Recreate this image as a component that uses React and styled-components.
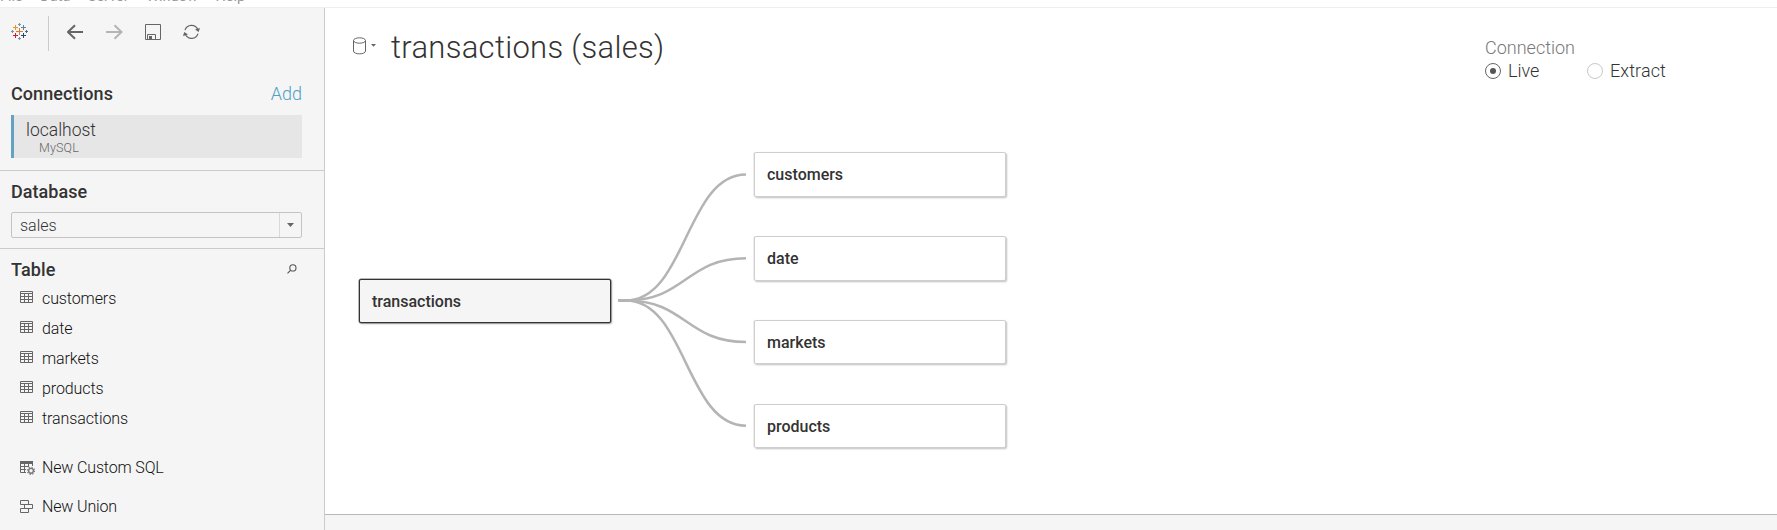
import React from "react";
import styled, { createGlobalStyle } from "styled-components";

const GlobalStyle = createGlobalStyle`
  * { box-sizing: border-box; }
  html, body { margin: 0; padding: 0; overflow: hidden; background: #fff; }
  body { font-family: Roboto, "Liberation Sans", sans-serif; font-weight: 350; color: #333; }
`;

const Window = styled.div`
  display: flex;
  flex-direction: column;
  width: 1777px;
  height: 530px;
  overflow: hidden;
`;

const MenuBar = styled.nav`
  display: flex;
  align-items: flex-end;
  gap: 17.5px;
  flex: none;
  height: 8px;
  padding-bottom: 2px;
  overflow: hidden;
  border-bottom: 1px solid #efefef;
`;

const MenuItem = styled.span`
  flex: none;
  font-size: 14.5px;
  font-weight: 400;
  line-height: 16px;
  color: #999;
`;

const Body = styled.div`
  display: flex;
  flex: 1;
  min-height: 0;
`;

const Sidebar = styled.aside`
  display: flex;
  flex-direction: column;
  flex: none;
  width: 325px;
  background: #f5f5f5;
  border-right: 1px solid #cbcbcb;
`;

const Toolbar = styled.div`
  display: flex;
  align-items: center;
  height: 47px;
  padding-left: 11px;
`;

const ToolDivider = styled.span`
  width: 1px;
  height: 35px;
  margin: 4px 18px 0 20px;
  background: #cbcbcb;
`;

const Tool = styled.span`
  display: flex;
  width: 17px;
  margin-right: ${(p) => p.$after || 0}px;
  color: ${(p) => (p.$muted ? "#b4b4b4" : "#666")};
`;

const Section = styled.section`
  flex: none;
  height: ${(p) => p.$height}px;
  padding: ${(p) => p.$top}px 22px 0 11px;
  border-bottom: 1px solid ${(p) => (p.$last ? "transparent" : "#cbcbcb")};
`;

const SectionHead = styled.div`
  display: flex;
  align-items: center;
  justify-content: space-between;
  height: 22px;
`;

const Label = styled.span`
  display: block;
  white-space: nowrap;
  padding-top: ${(p) => p.$drop || 0}px;
  font-size: ${(p) => p.$size}px;
  font-weight: ${(p) => p.$weight || 350};
  line-height: ${(p) => p.$line || 22}px;
  letter-spacing: ${(p) => p.$track || 0}px;
  color: ${(p) => p.$color || "#333"};
`;

const ConnectionCard = styled.div`
  height: 43px;
  margin-top: 11px;
  padding: 5px 0 0 12px;
  background: #e6e6e6;
  border-left: 3px solid #62a3c4;
`;

const Engine = styled.div`
  padding-left: 13px;
`;

const Select = styled.div`
  display: flex;
  align-items: stretch;
  justify-content: space-between;
  height: 26px;
  margin-top: 10px;
  padding-left: 8px;
  border: 1px solid #c4c4c4;
  border-radius: 2px;
`;

const SelectArrow = styled.span`
  display: flex;
  align-items: center;
  justify-content: center;
  width: 22px;
  border-left: 1px solid #d9d9d9;
`;

const SearchSlot = styled.span`
  display: flex;
  margin-right: 5px;
`;

const List = styled.ul`
  margin: 2px 0 0;
  padding: 0 0 0 9px;
  list-style: none;
`;

const Row = styled.li`
  display: flex;
  align-items: center;
  height: ${(p) => p.$height || 30}px;
`;

const RowIcon = styled.span`
  display: flex;
  width: 22px;
`;

const Actions = styled(List)`
  margin-top: 17px;
`;

const Main = styled.main`
  display: flex;
  flex-direction: column;
  flex: 1;
  background: #fff;
`;

const Header = styled.header`
  display: flex;
  justify-content: space-between;
  flex: none;
  height: 82px;
  padding: 20px 102px 0 28px;
`;

const TitleGroup = styled.div`
  display: flex;
  align-items: flex-start;
`;

const SourceIcon = styled.span`
  display: flex;
  width: 38px;
  padding-top: 9px;
`;

const Mode = styled.div`
  width: 190px;
  padding-top: 9px;
`;

const Radios = styled.div`
  display: flex;
  align-items: center;
  height: 22px;
  margin-top: 1px;
`;

const Option = styled.label`
  display: flex;
  align-items: center;
  flex: none;
  gap: 7px;
  width: 102px;
`;

const Radio = styled.span`
  display: flex;
  align-items: center;
  justify-content: center;
  flex: none;
  width: 16px;
  height: 16px;
  border: 1px solid ${(p) => (p.$on ? "#666" : "#c8c8c8")};
  border-radius: 50%;
  background: #fff;
  &::after {
    content: "";
    width: 6px;
    height: 6px;
    border-radius: 50%;
    background: ${(p) => (p.$on ? "#555" : "transparent")};
  }
`;

const Canvas = styled.div`
  position: relative;
  flex: 1;
`;

const Links = styled.svg`
  position: absolute;
  left: 0;
  top: 0;
`;

const Node = styled.div`
  position: absolute;
  left: ${(p) => p.$x}px;
  top: ${(p) => p.$y}px;
  display: flex;
  align-items: center;
  width: 252px;
  height: ${(p) => p.$h}px;
  padding-left: 12px;
  border: 1px solid ${(p) => (p.$root ? "#333" : "#cfcfcf")};
  border-radius: 2px;
  background: ${(p) => (p.$root ? "#f5f5f5" : "#fff")};
  box-shadow: ${(p) =>
    p.$root
      ? "0 0 0 0.5px #777, 1px 1px 2px rgba(0,0,0,0.3)"
      : "-1px 0 0 #ececec, 1px 1px 2px rgba(0,0,0,0.25)"};
`;

const Footer = styled.footer`
  flex: none;
  height: 16px;
  background: #f5f5f5;
  border-top: 1px solid #b8b8b8;
`;

const sparks = [
  [8.5, 8.5, 3.5, "#e8762c"],
  [4.5, 4.5, 2.5, "#eb912c"],
  [12.5, 4.5, 2.5, "#59879b"],
  [4.5, 12.5, 2.5, "#c72035"],
  [12.5, 12.5, 2.5, "#1f457e"],
  [8.5, 1.5, 1.5, "#7099a6"],
  [1.5, 8.5, 1.5, "#7099a6"],
  [15.5, 8.5, 1.5, "#5b6591"],
  [8.5, 15.5, 1.5, "#8a8fb5"],
];

const LogoIcon = () => (
  <svg width="17" height="17" viewBox="0 0 17 17">
    {sparks.map(([x, y, r, c]) => (
      <path key={`${x}-${y}`} d={`M${x - r} ${y}H${x + r}M${x} ${y - r}V${y + r}`} stroke={c} />
    ))}
  </svg>
);

const ArrowIcon = ({ flip }) => (
  <svg width="17" height="16" viewBox="0 0 17 16" fill="none" stroke="currentColor" strokeWidth="2">
    <path d={flip ? "M0 8H15.5M8.5 1.2L15.5 8L8.5 14.8" : "M16 8H1M8 1.2L1 8L8 14.8"} />
  </svg>
);

const SaveIcon = () => (
  <svg width="17" height="16" viewBox="0 0 17 16" fill="none" stroke="currentColor">
    <path d="M.5 .5H15.5V15.5H.5ZM2.5 15.5V10.5H10.5V15.5" />
    <path d="M4 12H7V15H4Z" fill="currentColor" stroke="none" />
  </svg>
);

const RefreshIcon = () => (
  <svg width="17" height="16" viewBox="0 0 17 16" fill="none" stroke="currentColor" strokeWidth="1.2">
    <path d="M2 6.2A6.8 6.8 0 0 1 14.8 5.6M15 9.6A6.8 6.8 0 0 1 2.4 10.6" />
    <path d="M12 5.6L17 4L15.6 8ZM5 10.4L0 12L1.2 8Z" fill="currentColor" stroke="none" />
  </svg>
);

const TableIcon = () => (
  <svg width="13" height="12" viewBox="0 0 13 12" fill="none" stroke="#666">
    <path d="M.5 .5H12.5V11.5H.5ZM.5 2.5H12.5M.5 5.5H12.5M.5 8.5H12.5M4.5 2.5V11.5M8.5 2.5V11.5" />
  </svg>
);

const CustomSqlIcon = () => (
  <svg width="15" height="14" viewBox="0 0 15 14" fill="none" stroke="#666">
    <path d="M0 0H13V3H0Z" fill="#666" stroke="none" />
    <path d="M.5 3V11.5H6M.5 5.5H8M.5 8.5H6M4.5 3V11.5M8.5 3V6M12.5 3V5" />
    <circle cx="11" cy="9.8" r="2.4" stroke="#777" strokeWidth="1.4" />
    <circle cx="11" cy="9.8" r="3.6" stroke="#777" strokeWidth="1.1" strokeDasharray="1.3 1.53" />
  </svg>
);

const UnionIcon = () => (
  <svg width="13" height="13" viewBox="0 0 13 13" fill="none" stroke="#666">
    <path d="M.5 .5H8.5V4.5H.5ZM4.5 4.5H12.5V8.5H4.5ZM.5 8.5H8.5V12.5H.5Z" />
  </svg>
);

const SearchIcon = () => (
  <svg width="10" height="10" viewBox="0 0 10 10" fill="none" stroke="#555" strokeWidth="1.1">
    <circle cx="5.9" cy="3.9" r="3.1" />
    <path d="M3.7 6.1L.5 9.3" />
  </svg>
);

const DatabaseIcon = () => (
  <svg width="25" height="18" viewBox="0 0 25 18" fill="none" stroke="#666">
    <ellipse cx="6.5" cy="3.5" rx="6" ry="2.7" />
    <path d="M.5 3.5V14C.5 17.8 12.5 17.8 12.5 14V3.5" />
    <path d="M18 7H23L20.5 9.7Z" fill="#666" stroke="none" />
  </svg>
);

const CaretIcon = () => (
  <svg width="7" height="4" viewBox="0 0 7 4">
    <path d="M0 0H7L3.5 4Z" fill="#666" />
  </svg>
);

const tables = ["customers", "date", "markets", "products", "transactions"];

const nodes = [
  { name: "customers", y: 62, h: 45, link: 84.5 },
  { name: "date", y: 146, h: 45, link: 168.2 },
  { name: "markets", y: 230, h: 44, link: 252 },
  { name: "products", y: 314, h: 44, link: 335.7 },
];

export default function App() {
  return (
    <>
      <GlobalStyle />
      <Window>
        <MenuBar>
          <MenuItem>File</MenuItem>
          <MenuItem>Data</MenuItem>
          <MenuItem>Server</MenuItem>
          <MenuItem>Window</MenuItem>
          <MenuItem>Help</MenuItem>
        </MenuBar>
        <Body>
          <Sidebar>
            <Toolbar>
              <LogoIcon />
              <ToolDivider />
              <Tool $after={22}><ArrowIcon /></Tool>
              <Tool $after={22} $muted><ArrowIcon flip /></Tool>
              <Tool $after={21}><SaveIcon /></Tool>
              <Tool><RefreshIcon /></Tool>
            </Toolbar>
            <Section $height={116} $top={27}>
              <SectionHead>
                <Label $size={18} $weight={500} $track={0.08} $drop={1}>Connections</Label>
                <Label $size={18} $color="#4f9fc4" $drop={2}>Add</Label>
              </SectionHead>
              <ConnectionCard>
                <Label $size={17.5} $line={20}>localhost</Label>
                <Engine>
                  <Label $size={12.5} $line={16} $track={0.15} $color="#666">MySQL</Label>
                </Engine>
              </ConnectionCard>
            </Section>
            <Section $height={78} $top={9}>
              <SectionHead>
                <Label $size={18} $weight={500} $track={0.05} $drop={1}>Database</Label>
              </SectionHead>
              <Select>
                <Label $size={16} $line={24} $drop={1}>sales</Label>
                <SelectArrow><CaretIcon /></SelectArrow>
              </Select>
            </Section>
            <Section $height={281} $top={9} $last>
              <SectionHead>
                <Label $size={18} $weight={500} $track={0.15} $drop={1}>Table</Label>
                <SearchSlot><SearchIcon /></SearchSlot>
              </SectionHead>
              <List>
                {tables.map((name) => (
                  <Row key={name}>
                    <RowIcon><TableIcon /></RowIcon>
                    <Label $size={16} $track={-0.1} $drop={3} $color="#111">{name}</Label>
                  </Row>
                ))}
              </List>
              <Actions>
                <Row $height={38}>
                  <RowIcon><CustomSqlIcon /></RowIcon>
                  <Label $size={16} $track={-0.15} $color="#111">New Custom SQL</Label>
                </Row>
                <Row $height={39}>
                  <RowIcon><UnionIcon /></RowIcon>
                  <Label $size={16} $track={-0.15} $color="#111">New Union</Label>
                </Row>
              </Actions>
            </Section>
          </Sidebar>
          <Main>
            <Header>
              <TitleGroup>
                <SourceIcon><DatabaseIcon /></SourceIcon>
                <Label $size={31} $line={40} $weight={300} $track={0.3}>transactions (sales)</Label>
              </TitleGroup>
              <Mode>
                <Label $size={18} $color="#777">Connection</Label>
                <Radios>
                  <Option><Radio $on /><Label $size={18}>Live</Label></Option>
                  <Option><Radio /><Label $size={18} $track={0.1}>Extract</Label></Option>
                </Radios>
              </Mode>
            </Header>
            <Canvas>
              <Links width="720" height="400" viewBox="0 0 720 400" fill="none" stroke="#b4b4b4" strokeWidth="2.5">
                {nodes.map((n) => (
                  <path key={n.name} d={`M293 210.5H301C361 210.5 361 ${n.link} 421 ${n.link}`} />
                ))}
              </Links>
              <Node $x={34} $y={189} $h={44} $root>
                <Label $size={16} $weight={500} $drop={1}>transactions</Label>
              </Node>
              {nodes.map((n) => (
                <Node key={n.name} $x={429} $y={n.y} $h={n.h}>
                  <Label $size={16} $weight={500} $drop={1}>{n.name}</Label>
                </Node>
              ))}
            </Canvas>
            <Footer />
          </Main>
        </Body>
      </Window>
    </>
  );
}
